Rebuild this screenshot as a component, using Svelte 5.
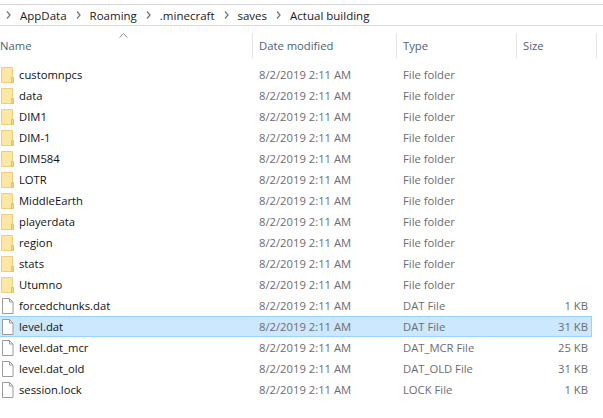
<script>
  const folder = ["customnpcs", "data", "DIM1", "DIM-1", "DIM584", "LOTR", "MiddleEarth", "playerdata", "region", "stats", "Utumno"];
  const files = [
    { name: "forcedchunks.dat", type: "DAT File", size: "1 KB" },
    { name: "level.dat", type: "DAT File", size: "31 KB", selected: true },
    { name: "level.dat_mcr", type: "DAT_MCR File", size: "25 KB" },
    { name: "level.dat_old", type: "DAT_OLD File", size: "31 KB" },
    { name: "session.lock", type: "LOCK File", size: "1 KB" }
  ];
  const rows = [
    ...folder.map((name) => ({ name, type: "File folder", size: "", isFolder: true })),
    ...files
  ];
  const crumbs = ["AppData", "Roaming", ".minecraft", "saves", "Actual building"];
</script>

<div class="window">
  <div class="address">
    {#each crumbs as crumb}
      <svg class="chevron" width="5" height="8" viewBox="0 0 5 8"><path d="M1 0.5 L4 4 L1 7.5" fill="none" stroke="#7a7a7a" stroke-width="1.3" /></svg>
      <span class="crumb">{crumb}</span>
    {/each}
  </div>

  <div class="header">
    <div class="col name">Name</div>
    <div class="col date">Date modified</div>
    <div class="col type">Type</div>
    <div class="col size">Size</div>
    <svg class="sort" width="9" height="5" viewBox="0 0 9 5"><path d="M0.5 4.5 L4.5 0.7 L8.5 4.5" fill="none" stroke="#8a8a8a" /></svg>
  </div>

  <div class="list">
    {#each rows as row}
      <div class="row" class:selected={row.selected}>
        <div class="cell name">
          {#if row.isFolder}
            <svg class="icon" width="13" height="16" viewBox="0 0 13 16">
              <path d="M0.5 0.5 H11.5 V15.5 H0.5 Z" fill="#fde7a3" stroke="#eccf7c" />
              <path d="M10.5 10.5 H12.5 V15.5 H10.5 Z" fill="#f7d87f" stroke="#e3c060" />
            </svg>
          {:else}
            <svg class="icon" width="13" height="16" viewBox="0 0 13 16">
              <path d="M1.5 0.5 H8.5 L12 4 V15.5 H1.5 Z" fill="#fff" stroke="#9b9b9b" />
              <path d="M8.5 0.5 V4 H12" fill="none" stroke="#9b9b9b" />
            </svg>
          {/if}
          <span class="filename">{row.name}</span>
        </div>
        <div class="cell date">8/2/2019 2:11 AM</div>
        <div class="cell type">{row.type}</div>
        <div class="cell size">{row.size}</div>
      </div>
    {/each}
  </div>
</div>

<style>
  :global(body) {
    margin: 0;
    background: #fff;
  }
  .window {
    width: 603px;
    height: 418px;
    overflow: hidden;
    font-family: "Open Sans", "Noto Sans", sans-serif;
    font-size: 11.25px;
    color: #6d6d6d;
    padding-top: 4px;
    box-sizing: border-box;
  }
  .address {
    height: 20px;
    border-top: 1px solid #d9d9d9;
    border-bottom: 1px solid #d9d9d9;
    display: flex;
    align-items: center;
    color: #1a1a1a;
    padding-left: 6px;
    font-size: 11.5px;
  }
  .chevron {
    margin-right: 9px;
  }
  .crumb {
    margin-right: 9px;
  }
  .header {
    position: relative;
    display: grid;
    grid-template-columns: 253px 144px 120px 80px;
    height: 25px;
    margin-top: 7px;
    color: #4c607a;
  }
  .col {
    display: flex;
    align-items: center;
    padding-left: 6px;
    border-right: 1px solid #e5e5e5;
  }
  .col.name {
    padding-left: 0;
  }
  .sort {
    position: absolute;
    left: 119px;
    top: 0;
  }
  .list {
    margin-top: 6px;
  }
  .row {
    display: grid;
    grid-template-columns: 252px 144px 117px 79px;
    width: 592px;
    height: 21px;
    box-sizing: border-box;
    align-items: center;
  }
  .row.selected {
    background: #cce8ff;
    border: 1px solid #99d1ff;
    border-left: 0;
  }
  .cell {
    padding-left: 7px;
    white-space: nowrap;
  }
  .cell.name {
    display: flex;
    align-items: center;
    padding-left: 1px;
    color: #111;
  }
  .cell.size {
    text-align: right;
    padding-right: 4px;
  }
  .icon {
    margin-right: 5px;
    flex: none;
  }
</style>
